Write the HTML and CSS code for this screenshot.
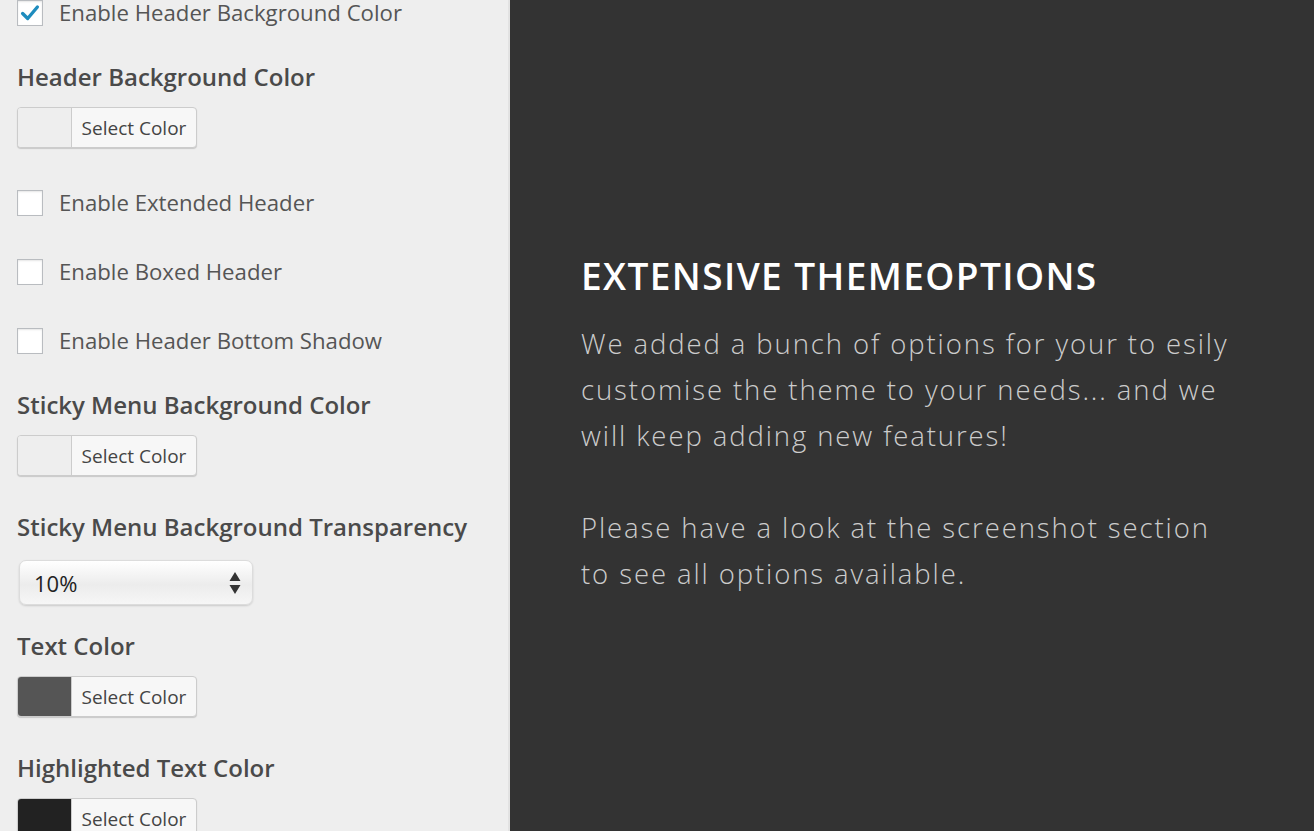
FILE: index.html
```html
<!DOCTYPE html>
<html lang="en">
<head>
    <meta charset="UTF-8">
    <meta name="viewport" content="width=device-width, initial-scale=1.0">
    <title>Extensive Theme Options</title>
    <link rel="stylesheet" href="styles.css">
</head>
<body>
    <div class="options-panel">
        <!-- Header background -->
        <label class="check-row first">
            <span class="checkbox checked">
                <svg viewBox="0 0 26 26" width="26" height="26"><path d="M5 13.5 L10.5 19 L21 6.5" fill="none" stroke="#1e8cbe" stroke-width="3.6" stroke-linecap="round" stroke-linejoin="round"/></svg>
            </span>
            Enable Header Background Color
        </label>

        <h3 class="option-title">Header Background Color</h3>
        <div class="color-button">
            <span class="swatch"></span>
            <span class="color-label">Select Color</span>
        </div>

        <label class="check-row gap-top">
            <span class="checkbox"></span>
            Enable Extended Header
        </label>
        <label class="check-row">
            <span class="checkbox"></span>
            Enable Boxed Header
        </label>
        <label class="check-row">
            <span class="checkbox"></span>
            Enable Header Bottom Shadow
        </label>

        <!-- Sticky menu -->
        <h3 class="option-title after-check">Sticky Menu Background Color</h3>
        <div class="color-button">
            <span class="swatch"></span>
            <span class="color-label">Select Color</span>
        </div>

        <h3 class="option-title">Sticky Menu Background Transparency</h3>
        <div class="select-box">
            <span>10%</span>
            <svg class="select-arrows" viewBox="0 0 12 24" width="12" height="24"><path d="M6 1 L11.5 10 H0.5 Z M6 23 L11.5 14 H0.5 Z" fill="#333"/></svg>
        </div>

        <!-- Text colours -->
        <h3 class="option-title after-select">Text Color</h3>
        <div class="color-button">
            <span class="swatch dark"></span>
            <span class="color-label">Select Color</span>
        </div>

        <h3 class="option-title">Highlighted Text Color</h3>
        <div class="color-button">
            <span class="swatch darker"></span>
            <span class="color-label">Select Color</span>
        </div>
    </div>

    <div class="info-panel">
        <h2>Extensive Themeoptions</h2>
        <p>We added a bunch of options for your to esily customise the theme to your needs... and we will keep adding new features!</p>
        <p>Please have a look at the screenshot section to see all options available.</p>
    </div>
</body>
</html>
```

FILE: styles.css
```css
/* General styles */
body {
    margin: 0;
    padding: 0;
    display: flex;
    height: 100vh;
    overflow: hidden;
    font-family: "Open Sans", "Noto Sans", sans-serif;
}

/* Left options column */
.options-panel {
    width: 510px;
    flex-shrink: 0;
    background: #eeeeee;
    border-right: 2px solid #e2e2e2;
    padding: 0 0 0 17px;
    box-sizing: border-box;
}

.check-row {
    display: flex;
    align-items: center;
    gap: 16px;
    height: 26px;
    line-height: 26px;
    margin-bottom: 43px;
    font-size: 22.2px;
    color: #555;
}

.check-row.first {
    margin-bottom: 0;
}

.check-row.gap-top {
    margin-top: 42px;
}

.checkbox {
    width: 24px;
    height: 24px;
    background: #fff;
    border: 1px solid #b9bcc0;
    box-shadow: inset 0 1px 2px rgba(0, 0, 0, 0.1);
    display: flex;
    align-items: center;
    justify-content: center;
}

.option-title {
    margin: 36px 0 0;
    font-size: 24px;
    line-height: 30px;
    font-weight: 600;
    color: #4a4a4a;
}

.check-row.first + .option-title {
    margin-top: 36px;
}

.check-row + .option-title.after-check {
    margin-top: -7px;
}

.option-title.after-select {
    margin-top: 26px;
}

/* Colour picker button */
.color-button {
    display: flex;
    width: 178px;
    height: 39px;
    margin-top: 15px;
    border: 1px solid #cccccc;
    border-radius: 4px;
    background: #f7f7f7;
    box-shadow: 0 1px 1px #c8c8c8;
    overflow: hidden;
}

.swatch {
    width: 53px;
    background: #eeeeee;
    border-right: 1px solid #cccccc;
}

.swatch.dark {
    background: #555555;
}

.swatch.darker {
    background: #222222;
}

.color-label {
    flex: 1;
    display: flex;
    align-items: center;
    justify-content: center;
    font-size: 19px;
    color: #444;
}

/* Dropdown */
.select-box {
    display: flex;
    align-items: center;
    justify-content: space-between;
    width: 234px;
    height: 45px;
    margin: 18px 0 0 2px;
    padding: 0 11px 0 14px;
    box-sizing: border-box;
    border: 1px solid #dcdcdc;
    border-radius: 7px;
    background: linear-gradient(#ffffff, #ececec 55%, #f6f6f6);
    box-shadow: 0 1px 2px rgba(0, 0, 0, 0.15);
    font-size: 22px;
    color: #222;
}

/* Right info column */
.info-panel {
    flex: 1;
    background: #333333;
    padding: 250px 80px 0 71px;
}

.info-panel h2 {
    margin: 0 0 20px;
    font-size: 37px;
    font-weight: 600;
    letter-spacing: 1.4px;
    text-transform: uppercase;
    color: #ffffff;
}

.info-panel p {
    margin: 0 0 46px;
    font-size: 27.5px;
    font-weight: 300;
    line-height: 46px;
    letter-spacing: 1.9px;
    color: #cccccc;
}
```
